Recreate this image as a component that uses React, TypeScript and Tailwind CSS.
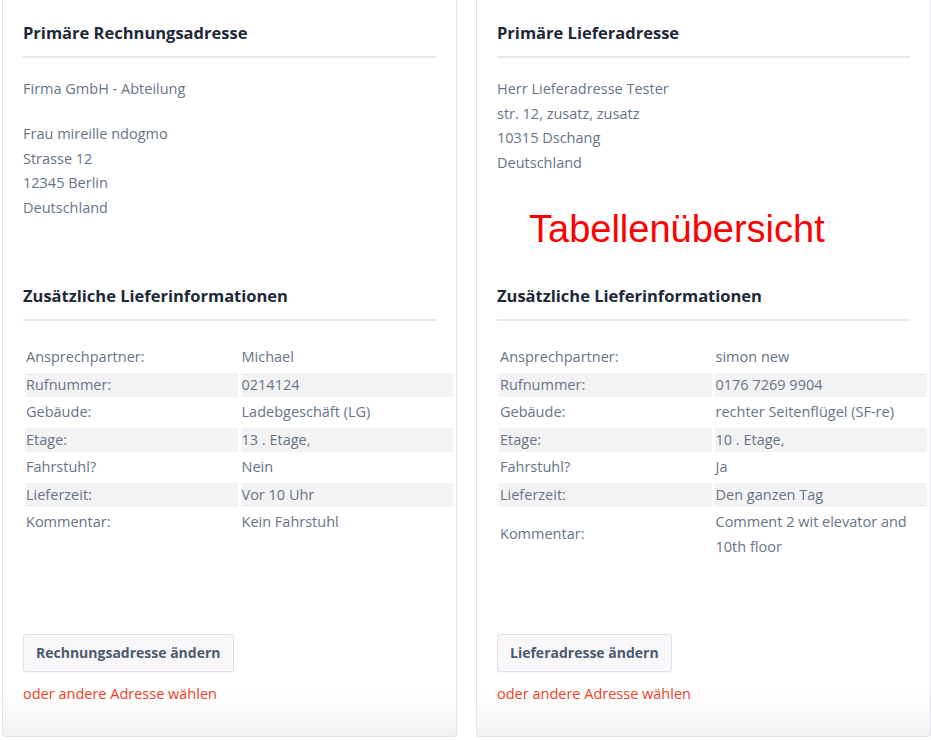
import React from "react";

type Row = { label: string; value: string };

const billingRows: Row[] = [
  { label: "Ansprechpartner:", value: "Michael" },
  { label: "Rufnummer:", value: "0214124" },
  { label: "Gebäude:", value: "Ladebgeschäft (LG)" },
  { label: "Etage:", value: "13 . Etage," },
  { label: "Fahrstuhl?", value: "Nein" },
  { label: "Lieferzeit:", value: "Vor 10 Uhr" },
  { label: "Kommentar:", value: "Kein Fahrstuhl" },
];

const shippingRows: Row[] = [
  { label: "Ansprechpartner:", value: "simon new" },
  { label: "Rufnummer:", value: "0176 7269 9904" },
  { label: "Gebäude:", value: "rechter Seitenflügel (SF-re)" },
  { label: "Etage:", value: "10 . Etage," },
  { label: "Fahrstuhl?", value: "Ja" },
  { label: "Lieferzeit:", value: "Den ganzen Tag" },
  { label: "Kommentar:", value: "Comment 2 wit elevator and 10th floor" },
];

const Heading = ({ children }: { children: React.ReactNode }) => (
  <h2 className="text-[16.5px] leading-6 font-bold text-[#1d2939] pb-[11px] border-b-2 border-[#e6e7ee]">
    {children}
  </h2>
);

const InfoTable = ({ rows }: { rows: Row[] }) => (
  <table className="w-[434px] -ml-[1px] mt-[21px] table-fixed border-separate border-spacing-[3px]">
    <tbody>
      {rows.map((row, i) => (
        <tr key={row.label} className={i % 2 === 1 ? "bg-[#f3f3f4]" : ""}>
          <td className="w-1/2 px-[1px] py-0 align-middle leading-[24.5px]">{row.label}</td>
          <td className="w-1/2 px-[1px] py-0 align-middle leading-[24.5px]">{row.value}</td>
        </tr>
      ))}
    </tbody>
  </table>
);

const Card = ({
  title,
  address,
  rows,
  button,
}: {
  title: string;
  address: React.ReactNode;
  rows: Row[];
  button: string;
}) => (
  <div className="w-[455px] h-[737px] flex flex-col border-x border-b border-[#e1e2ea] rounded-b-[4px] px-5 pt-[21px] pb-[30px] bg-[linear-gradient(180deg,#ffffff_94%,#f2f2f4_100%)]">
    <Heading>{title}</Heading>
    <div className="mt-[19px] h-[207px] leading-[24.5px]">{address}</div>
    <Heading>Zusätzliche Lieferinformationen</Heading>
    <InfoTable rows={rows} />
    <div className="mt-auto">
      <button className="h-[38px] px-3 rounded-[3px] border border-[#dfe0e8] bg-[#f8f8fa] shadow-[0_1px_1px_rgba(0,0,0,0.04)] text-sm font-bold text-[#4b5a6e]">
        {button}
      </button>
      <div className="mt-[10px] leading-6 text-[#f0401e]">oder andere Adresse wählen</div>
    </div>
  </div>
);

export default function App() {
  return (
    <div className="min-h-screen bg-white pl-[2px] flex gap-[19px] text-[14.5px] text-[#687487] font-['Open_Sans',sans-serif]">
      <Card
        title="Primäre Rechnungsadresse"
        address={
          <>
            <p className="mb-[20.5px]">Firma GmbH - Abteilung</p>
            <p>Frau mireille ndogmo</p>
            <p>Strasse 12</p>
            <p>12345 Berlin</p>
            <p>Deutschland</p>
          </>
        }
        rows={billingRows}
        button="Rechnungsadresse ändern"
      />
      <Card
        title="Primäre Lieferadresse"
        address={
          <>
            <p>Herr Lieferadresse Tester</p>
            <p>str. 12, zusatz, zusatz</p>
            <p>10315 Dschang</p>
            <p>Deutschland</p>
            <p className="mt-[33px] ml-[32px] text-[38px] leading-[42px] text-[#ff0000] font-['Liberation_Sans',Arial,sans-serif]">
              Tabellenübersicht
            </p>
          </>
        }
        rows={shippingRows}
        button="Lieferadresse ändern"
      />
    </div>
  );
}
